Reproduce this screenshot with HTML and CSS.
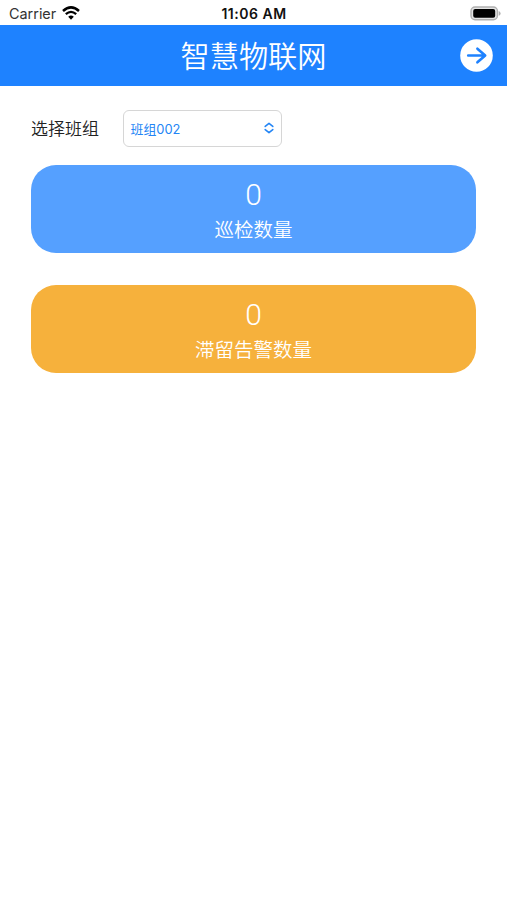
FILE: index.html
```html
<!DOCTYPE html>
<html lang="zh-CN">
<head>
    <meta charset="UTF-8">
    <meta name="viewport" content="width=device-width, initial-scale=1.0">
    <title>智慧物联网</title>
    <link rel="stylesheet" href="styles.css">
</head>
<body>
    <!-- 状态栏 -->
    <div class="status-bar">
        <div class="carrier">
            <span>Carrier</span>
            <svg class="wifi" width="18" height="14" viewBox="0 0 18 14">
                <path d="M1 5Q9 -2.2 17 5" fill="none" stroke="#000" stroke-width="2.5"/>
                <path d="M3.8 8.1Q9 3.6 14.2 8.1" fill="none" stroke="#000" stroke-width="2.3"/>
                <path d="M6.2 10.7Q9 8.2 11.8 10.7L9 13.7Z" fill="#000"/>
            </svg>
        </div>
        <div class="time">11:06 AM</div>
        <svg class="battery" width="31" height="15" viewBox="0 0 31 15">
            <rect x="1" y="1" width="26.4" height="12.8" rx="4" fill="#e4e4e4" stroke="#b0b0b0" stroke-width="1.4"/>
            <rect x="3.2" y="3" width="22" height="8.8" rx="2" fill="#000"/>
            <path d="M28.7 5Q30.6 5.8 30.6 7.4T28.7 9.8Z" fill="#b0b0b0"/>
        </svg>
    </div>

    <!-- 标题栏 -->
    <header class="header">
        <h1 class="title">智慧物联网</h1>
        <button class="logout-btn" title="退出">
            <svg width="33" height="33" viewBox="0 0 33 33">
                <circle cx="16.5" cy="16.5" r="16.3" fill="#fff"/>
                <path d="M8.2 16.5H25M17.4 9.7L25.2 16.5L17.4 23.3" fill="none" stroke="#1e82ff" stroke-width="2.6" stroke-linecap="round" stroke-linejoin="round"/>
            </svg>
        </button>
    </header>

    <main class="content">
        <!-- 班组选择 -->
        <div class="team-row">
            <span class="team-label">选择班组</span>
            <div class="team-select">
                <span>班组002</span>
                <svg width="10" height="12" viewBox="0 0 10 12">
                    <path d="M1.2 4.4L5 1.4L8.8 4.4M1.2 7.6L5 10.6L8.8 7.6" fill="none" stroke="#2385f5" stroke-width="1.6" stroke-linecap="round" stroke-linejoin="round"/>
                </svg>
            </div>
        </div>

        <!-- 统计卡片 -->
        <div class="card card-blue">
            <div class="card-number">0</div>
            <div class="card-name">巡检数量</div>
        </div>
        <div class="card card-orange">
            <div class="card-number">0</div>
            <div class="card-name">滞留告警数量</div>
        </div>
    </main>
</body>
</html>
```

FILE: styles.css
```css
body {
    margin: 0;
    min-height: 100vh;
    background: #fff;
    font-family: Inter, "Noto Sans CJK SC", sans-serif;
}

.status-bar {
    display: grid;
    grid-template-columns: 1fr auto 1fr;
    align-items: center;
    box-sizing: border-box;
    height: 25.4px;
    padding: 2px 6px 0 9px;
    font-size: 14.4px;
    line-height: 24px;
    color: #333;
}

.carrier {
    display: flex;
    align-items: center;
    gap: 6px;
}

.wifi {
    margin-top: -2px;
}

.time {
    margin-left: -2px;
    font-size: 14px;
    font-weight: 600;
    letter-spacing: 0.5px;
    color: #111;
}

.battery {
    justify-self: end;
    margin-top: -2px;
}

.header {
    display: grid;
    grid-template-columns: 1fr auto 1fr;
    align-items: center;
    height: 61px;
    padding: 0 14px;
    background: #1e82ff;
}

.title {
    grid-column: 2;
    margin: 0;
    padding-bottom: 3px;
    font-family: "Noto Sans CJK SC", sans-serif;
    font-size: 29.2px;
    font-weight: 350;
    line-height: 58px;
    color: #fff;
}

.logout-btn {
    display: flex;
    justify-self: end;
    padding: 0;
    border: none;
    background: none;
    cursor: pointer;
}

.content {
    padding: 23.2px 31px 0;
}

.team-row {
    display: flex;
    align-items: center;
    margin-bottom: 18px;
}

.team-label {
    width: 91.5px;
    padding-top: 1px;
    font-size: 17px;
    line-height: 34px;
    font-weight: 350;
    color: #222;
}

.team-select {
    display: flex;
    align-items: center;
    justify-content: space-between;
    box-sizing: border-box;
    width: 159px;
    height: 37px;
    padding: 0 7px;
    border: 1px solid #d6d6d6;
    border-radius: 6px;
    font-size: 12.9px;
    color: #2385f5;
}

.card {
    box-sizing: border-box;
    width: 445px;
    height: 88px;
    margin-bottom: 32px;
    padding-top: 12px;
    border-radius: 25px;
    text-align: center;
    color: #fff;
}

.card-blue {
    background: #55a0ff;
}

.card-orange {
    background: #f6b13c;
}

.card-number {
    font-family: Roboto, sans-serif;
    font-size: 30px;
    font-weight: 350;
    line-height: 36px;
}

.card-name {
    font-size: 19.5px;
    font-weight: 350;
    line-height: 34px;
}
```
